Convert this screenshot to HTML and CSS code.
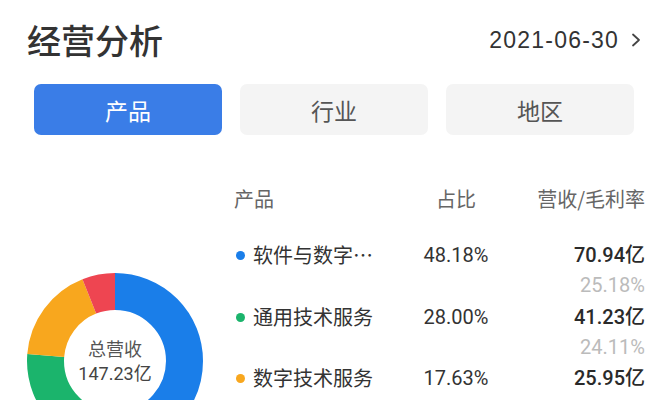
FILE: index.html
```html
<!DOCTYPE html>
<html lang="zh-CN">
<head>
<meta charset="utf-8">
<link rel="stylesheet" href="styles.css">
</head>
<body>
<div class="page">
  <header class="top">
    <h1 class="title">经营分析</h1>
    <div class="date">
      <span class="date-text">2021-06-30</span>
      <svg class="chev" width="10" height="14" viewBox="0 0 10 14"><path d="M2 1.5 L8 7 L2 12.5" fill="none" stroke="#444" stroke-width="1.8" stroke-linecap="round" stroke-linejoin="round"/></svg>
    </div>
  </header>

  <nav class="tabs">
    <div class="tab active">产品</div>
    <div class="tab">行业</div>
    <div class="tab">地区</div>
  </nav>

  <section class="content">
    <div class="chart">
      <div class="donut">
        <svg width="176" height="176" viewBox="0 0 176 176">
          <g transform="rotate(-90 88 88)">
            <circle cx="88" cy="88" r="69.5" fill="none" stroke="#1a7ee9" stroke-width="37" stroke-dasharray="210.4 226.3" stroke-dashoffset="0"/>
            <circle cx="88" cy="88" r="69.5" fill="none" stroke="#1bb46c" stroke-width="37" stroke-dasharray="122.3 314.4" stroke-dashoffset="-210.4"/>
            <circle cx="88" cy="88" r="69.5" fill="none" stroke="#f8a71e" stroke-width="37" stroke-dasharray="77.0 359.7" stroke-dashoffset="-332.7"/>
            <circle cx="88" cy="88" r="69.5" fill="none" stroke="#ee4551" stroke-width="37" stroke-dasharray="27.0 409.7" stroke-dashoffset="-409.7"/>
          </g>
        </svg>
        <div class="donut-label">
          <span class="dl-title">总营收</span>
          <span class="dl-value">147.23亿</span>
        </div>
      </div>
    </div>

    <div class="table">
      <div class="th">产品</div>
      <div class="th center">占比</div>
      <div class="th right">营收/毛利率</div>

      <div class="name"><i class="dot" style="background:#1a7ee9"></i><span class="nm">软件与数字化服务</span></div>
      <div class="pct">48.18%</div>
      <div class="val">70.94亿</div>
      <div class="sub">25.18%</div>

      <div class="name"><i class="dot" style="background:#1bb46c"></i><span class="nm">通用技术服务</span></div>
      <div class="pct">28.00%</div>
      <div class="val">41.23亿</div>
      <div class="sub">24.11%</div>

      <div class="name"><i class="dot" style="background:#f8a71e"></i><span class="nm">数字技术服务</span></div>
      <div class="pct">17.63%</div>
      <div class="val">25.95亿</div>
    </div>
  </section>
</div>
</body>
</html>
```

FILE: styles.css
```css
* { box-sizing: border-box; }
html, body {
  margin: 0;
  padding: 0;
  background: #ffffff;
  overflow: hidden;
}
body {
  font-family: "Noto Sans CJK SC", "Noto Sans", sans-serif;
  color: #333;
}
.page {
  width: 672px;
  height: 400px;
  overflow: hidden;
}

.top {
  display: flex;
  align-items: center;
  justify-content: space-between;
  height: 40px;
  margin-top: 20px;
  padding: 0 31px 0 27px;
}
.title {
  margin: 0;
  font-size: 34px;
  font-weight: 500;
  line-height: 40px;
  color: #333;
}
.date {
  display: flex;
  align-items: center;
  gap: 12px;
}
.date-text {
  font-family: "Liberation Sans", sans-serif;
  font-size: 23px;
  letter-spacing: 1.2px;
  color: #333;
  line-height: 30px;
}
.chev { display: block; }

.tabs {
  display: grid;
  grid-template-columns: repeat(3, 188px);
  column-gap: 18px;
  margin-top: 24px;
  padding-left: 34px;
}
.tab {
  height: 51px;
  border-radius: 7px;
  background: #f4f4f4;
  color: #555;
  font-size: 23px;
  display: flex;
  align-items: center;
  justify-content: center;
}
.tab.active {
  background: #3a7de7;
  color: #fff;
}

.content {
  display: flex;
  align-items: flex-start;
  margin-top: 49px;
}
.chart {
  width: 234px;
  flex: none;
  padding-top: 89px;
  padding-left: 27px;
}
.donut {
  position: relative;
  width: 176px;
  height: 176px;
}
.donut svg { display: block; }
.donut-label {
  position: absolute;
  left: 0;
  right: 0;
  top: 62px;
  display: flex;
  flex-direction: column;
  align-items: center;
}
.dl-title {
  font-size: 18px;
  line-height: 26px;
  color: #555;
}
.dl-value {
  font-family: Roboto, "Noto Sans CJK SC", sans-serif;
  font-size: 18px;
  line-height: 26px;
  color: #444;
}

.table {
  display: grid;
  grid-template-columns: 189px 66px 156px;
  grid-template-rows: 56px 30px 32px 30px 31px 30px;
  font-size: 20px;
}
.th {
  color: #666;
  line-height: 30px;
  align-self: start;
}
.center { text-align: center; }
.right { text-align: right; }

.name {
  display: flex;
  align-items: center;
  gap: 8px;
  padding-left: 2px;
  line-height: 30px;
  color: #333;
  grid-column: 1;
}
.dot {
  width: 9px;
  height: 9px;
  border-radius: 50%;
  flex: none;
}
.nm {
  width: 120px;
  white-space: nowrap;
  overflow: hidden;
  text-overflow: ellipsis;
}
.pct {
  font-family: Roboto, sans-serif;
  text-align: center;
  line-height: 30px;
  color: #333;
}
.val {
  font-family: Roboto, "Noto Sans CJK SC", sans-serif;
  font-weight: 500;
  text-align: right;
  line-height: 30px;
  color: #2a2a2a;
}
.sub {
  grid-column: 3;
  font-family: Roboto, sans-serif;
  text-align: right;
  line-height: 30px;
  color: #bbb;
  align-self: start;
}
```
